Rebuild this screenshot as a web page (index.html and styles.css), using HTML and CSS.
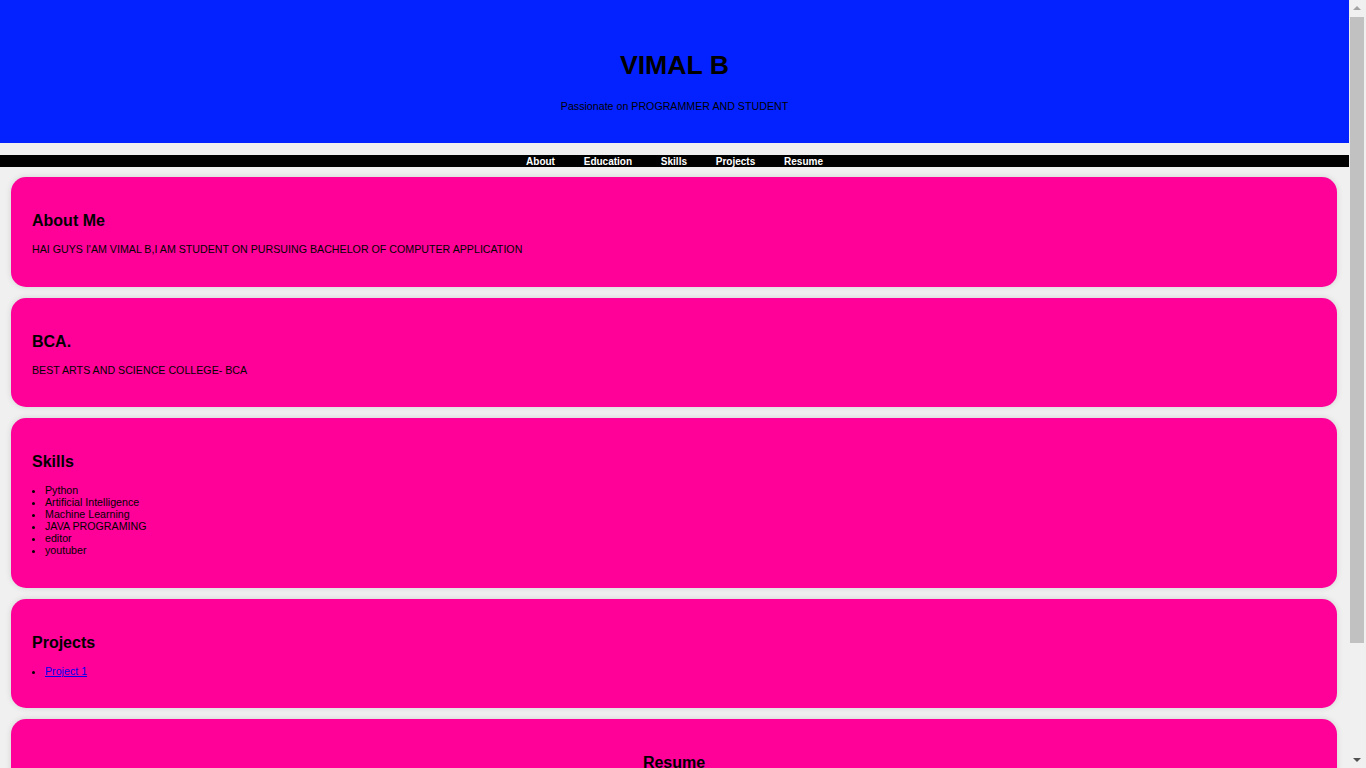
FILE: index.html
```html
<!DOCTYPE html>
<html lang="en">
<head>
<meta charset="utf-8">
<title>VIMAL B</title>
<link rel="stylesheet" href="styles.css">
</head>
<body>
<header class="site-header">
  <h1 class="site-title">VIMAL B</h1>
  <p class="site-tagline">Passionate on PROGRAMMER AND STUDENT</p>
</header>
<nav class="site-nav">
  <a href="#about">About</a>
  <a href="#education">Education</a>
  <a href="#skills">Skills</a>
  <a href="#projects">Projects</a>
  <a href="#resume">Resume</a>
</nav>
<main class="content">
  <section class="card" id="about">
    <h2>About Me</h2>
    <p>HAI GUYS I'AM VIMAL B,I AM STUDENT ON PURSUING BACHELOR OF COMPUTER APPLICATION</p>
  </section>
  <section class="card" id="education">
    <h2>BCA.</h2>
    <p>BEST ARTS AND SCIENCE COLLEGE- BCA</p>
  </section>
  <section class="card" id="skills">
    <h2>Skills</h2>
    <ul>
      <li>Python</li>
      <li>Artificial Intelligence</li>
      <li>Machine Learning</li>
      <li>JAVA PROGRAMING</li>
      <li>editor</li>
      <li>youtuber</li>
    </ul>
  </section>
  <section class="card" id="projects">
    <h2>Projects</h2>
    <ul>
      <li><a href="#">Project 1</a></li>
    </ul>
  </section>
  <section class="card card-center" id="resume">
    <h2>Resume</h2>
    <p><a href="#">Download Resume</a></p>
  </section>
</main>
<div class="fake-scrollbar" aria-hidden="true">
  <div class="sb-arrow sb-up"></div>
  <div class="sb-track"><div class="sb-thumb"></div></div>
  <div class="sb-arrow sb-down"></div>
</div>
</body>
</html>
```
FILE: styles.css
```css
html {
  background: #f0f0f0;
}
body {
  margin: 0 17px 0 0;
  font-family: "Liberation Sans", Arial, sans-serif;
  font-size: 10.667px;
  color: #000;
  background: #f0f0f0;
}
.site-header {
  background: #0422ff;
  text-align: center;
  padding: 30px 0 20px;
}
.site-title {
  font-size: 26.667px;
  margin: 20px 0 19px;
}
.site-tagline {
  margin: 0 0 11px;
}
.site-nav {
  margin-top: 12px;
  background: #000;
  text-align: center;
  line-height: 11px;
  padding-top: 1px;
  font-size: 10px;
  font-weight: bold;
}
.site-nav a {
  color: #fff;
  text-decoration: none;
  margin: 0 13px;
}
.content {
  padding: 10px 12px 1px 11px;
}
.card {
  background: #ff0099;
  border-radius: 15px;
  box-shadow: 0 0 6px rgba(0, 0, 0, 0.12);
  padding: 22px 21px 18.5px;
  margin-bottom: 11px;
  display: flow-root;
}
.card h2 {
  font-size: 16px;
  margin: 13px 0;
}
.card p {
  margin: 13px 0;
}
.card ul {
  margin: 13px 0;
  padding-left: 13px;
}
.card li {
  line-height: 12px;
}
.card a {
  color: #0000ee;
}
.card-center {
  text-align: center;
  min-height: 128px;
}
.fake-scrollbar {
  position: fixed;
  top: 0;
  right: 0;
  width: 17px;
  height: 100vh;
  background: #f0f0f0;
  display: flex;
  flex-direction: column;
}
.sb-arrow {
  height: 17px;
  flex: none;
  position: relative;
}
.sb-arrow::after {
  content: "";
  position: absolute;
  left: 4px;
  border-left: 4px solid transparent;
  border-right: 4px solid transparent;
}
.sb-up::after {
  top: 6px;
  border-bottom: 4px solid #a3a3a3;
}
.sb-down::after {
  top: 7px;
  border-top: 4px solid #505050;
}
.sb-track {
  flex: 1;
  padding: 0 2px 0 1px;
}
.sb-thumb {
  height: 626px;
  background: #c1c1c1;
}
```
